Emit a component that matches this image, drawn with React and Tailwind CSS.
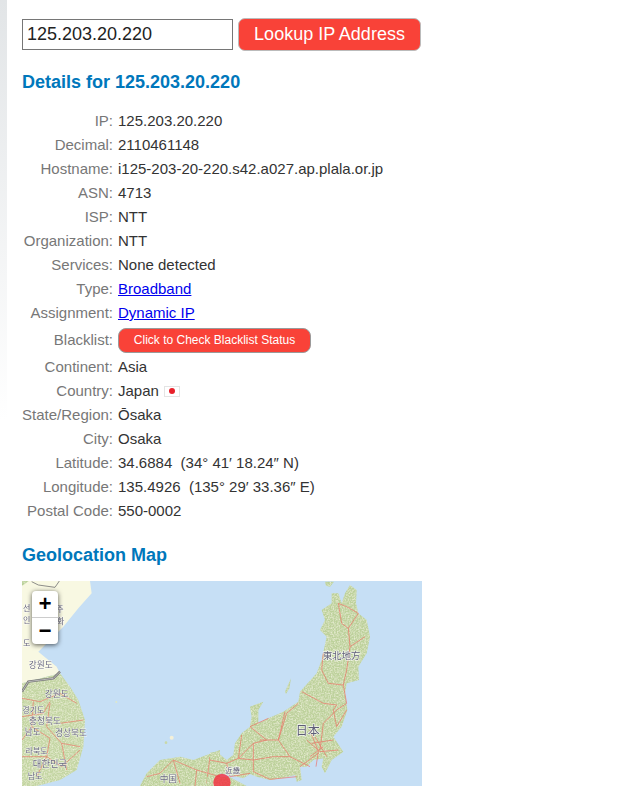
import React from 'react';

const rows = [
  ['IP', '125.203.20.220'],
  ['Decimal', '2110461148'],
  ['Hostname', 'i125-203-20-220.s42.a027.ap.plala.or.jp'],
  ['ASN', '4713'],
  ['ISP', 'NTT'],
  ['Organization', 'NTT'],
  ['Services', 'None detected'],
  ['Type', <a key="t" href="#" className="text-[#0000ee] underline">Broadband</a>],
  ['Assignment', <a key="a" href="#" className="text-[#0000ee] underline">Dynamic IP</a>],
  ['Blacklist', <button key="b" className="h-[25px] w-[193px] rounded-[8px] border border-[#9a9a9a] bg-[#f94238] text-[12px] font-medium text-white">Click to Check Blacklist Status</button>],
  ['Continent', 'Asia'],
  ['Country', <span key="c" className="flex items-center gap-[5px]">Japan <span className="flex h-[11px] w-[16px] items-center justify-center border border-[#e4e4e4] bg-white"><span className="h-[6px] w-[6px] rounded-full bg-[#e8202a]" /></span></span>],
  ['State/Region', 'Ōsaka'],
  ['City', 'Osaka'],
  ['Latitude', '34.6884\u00a0 (34° 41′ 18.24″ N)'],
  ['Longitude', '135.4926\u00a0 (135° 29′ 33.36″ E)'],
  ['Postal Code', '550-0002'],
];

const koreanLabels = [
  ['강원도', 122, 285, 26],
  ['강원도', 170, 372, 26],
  ['경기도', 100, 420, 24],
  ['충청북도', 135, 452, 26],
  ['경상북도', 213, 490, 26],
  ['남도', 98, 487, 26],
  ['라북도', 110, 542, 24],
  ['대한민국', 150, 581, 28],
  ['남도', 105, 617, 24],
];

function JapanMap() {
  return (
    <svg viewBox="0 0 1200 615" className="h-full w-full blur-[0.3px]">
      <defs>
        <filter id="mottle">
          <feTurbulence type="fractalNoise" baseFrequency="0.22" numOctaves="2" seed="4" result="n" />
          <feColorMatrix in="n" values="0 0 0 0 1  0 0 0 0 0.98  0 0 0 0 0.85  1.3 0 0 0 -0.5" result="w" />
          <feComposite in="w" in2="SourceAlpha" operator="in" result="t" />
          <feMerge>
            <feMergeNode in="SourceGraphic" />
            <feMergeNode in="t" />
          </feMerge>
        </filter>
      </defs>
      <rect width="1200" height="615" fill="#c6dff5" />

      <g transform="translate(-66,-33)">
        <path d="M66 33L270 33L275 70L235 115L190 170L130 230L115 245L170 290L180 310L66 340Z" fill="#f8f8e2" />
        <g filter="url(#mottle)">
          <path d="M66 340L180 310L210 350L235 390L255 450L250 530L230 600L180 630L110 648L66 648Z" fill="#c3d5a2" />
          <path d="M420 648L440 610L480 570L540 560L580 570L620 555L660 540L660 648Z" fill="#bdd19b" />
          <path d="M66 33L86 33L66 48Z" fill="#b6cf94" />
        </g>
        <path d="M95 35L115 45L165 52L178 33" fill="none" stroke="#777" strokeWidth="2.5" />
        <path d="M66 365L85 335L160 325L180 305" fill="none" stroke="#777" strokeWidth="7" />
        <path d="M66 365L85 335L160 325L180 305" fill="none" stroke="#ddd" strokeWidth="2" />
        <circle cx="515" cy="503" r="6" fill="#f4f0d8" />
        <circle cx="349" cy="396" r="3" fill="#dfe8c8" />
        <circle cx="498" cy="518" r="4" fill="#c8d8a8" />
        <g fill="none" stroke="#f0685f" strokeWidth="2.5" opacity="0.7">
          <path d="M66 385L120 395L180 370L230 400" />
          <path d="M66 440L130 430L150 395" />
          <path d="M100 395L95 470L66 510" />
          <path d="M150 400L140 470L185 520L240 530" />
          <path d="M95 470L150 505L140 560L185 590L240 540" />
          <path d="M66 560L140 560L110 620" />
          <path d="M180 460L250 450" />
          <path d="M185 520L200 600" />
          <path d="M440 620L480 610L520 570L590 600L660 620" />
          <path d="M520 570L540 640M590 600L585 648M630 560L620 640" />
        </g>
        <g fontFamily="'Noto Sans CJK KR', sans-serif" fill="#6b6a80" stroke="#ffffff" strokeOpacity="0.7" strokeWidth="3" paintOrder="stroke" textAnchor="middle">
          {koreanLabels.map(([t, x, y, s]) => (
            <text key={t + x} x={x} y={y + 9} fontSize={s}>{t}</text>
          ))}
          <text x="505" y="636" fontSize="26">中国</text>
          <text x="80" y="122" fontSize="24">선</text>
          <text x="180" y="125" fontSize="24">주</text>
          <text x="80" y="160" fontSize="24">인</text>
          <text x="182" y="162" fontSize="24">화</text>
          <text x="80" y="228" fontSize="24">도</text>
        </g>
      </g>

      <g transform="translate(564,-33)">
        <g filter="url(#mottle)">
          <path d="M345 35L372 35L360 50L348 47Z" fill="#b9d09a" />
          <path d="M365 70L385 70L395 100L405 70L420 45L440 60L438 100L445 130L470 150L480 200L470 250L445 290L447 330L410 340L405 370L412 420L395 470L370 500L390 530L400 545L365 570L345 610L335 590L340 565L310 570L290 590L270 590L275 630L260 635L255 615L215 625L180 630L140 620L120 612L100 625L60 615L0 605L0 548L20 545L50 570L70 555L75 520L95 490L120 470L125 440L120 410L160 395L145 420L145 460L175 445L220 425L265 395L270 365L320 310L335 270L350 200L330 180L345 150L335 120L365 100Z" fill="#bdd19b" />
          <path d="M225 365L243 325L238 355L228 372Z" fill="#bdd19b" />
          <path d="M-10 648L-10 620L60 622L110 648Z" fill="#bdd19b" />
        </g>
        <g fill="none" stroke="#f0685f" strokeWidth="2.5" opacity="0.75">
          <path d="M385 100L395 160L415 175L420 230L410 300L400 345L410 400L380 420L340 460L330 540" />
          <path d="M445 130L415 175M465 200L420 230M385 100L410 110L445 130" />
          <path d="M275 365L340 400L380 405L370 420" />
          <path d="M265 400L230 430L205 510L240 560L300 590" />
          <path d="M95 495L85 565L130 520L130 605M120 470L170 510L130 520" />
          <path d="M225 425L205 510L150 510M175 445L120 470" />
          <path d="M290 510L330 545L385 540M300 480L325 545L318 590M270 590L325 550" />
          <path d="M305 520L370 510M315 500L350 560M340 530L300 560" />
          <path d="M85 565L130 570L190 560L240 560M130 605L180 628L260 620" />
          <path d="M0 570L50 580L85 565M50 580L60 620L120 610" />
          <path d="M340 250L335 300L355 340L400 345" />
          <path d="M370 420L380 470L410 420" />
        </g>
        <g fontFamily="'Noto Sans CJK JP', sans-serif" fill="#5e5d78" stroke="#ffffff" strokeOpacity="0.75" strokeWidth="4" paintOrder="stroke" textAnchor="middle">
          <text x="395" y="267" fontSize="28">東北地方</text>
          <text x="293" y="495" fontSize="36">日本</text>
          <text x="68" y="610" fontSize="22">近畿</text>
        </g>
        <circle cx="36" cy="637" r="26" fill="#f42a3c" opacity="0.8" />
      </g>
    </svg>
  );
}

export default function App() {
  return (
    <div className="flex h-[786px] overflow-hidden bg-white font-['Liberation_Sans',Arial,sans-serif] text-[15px] text-[#333]">
      <div className="h-[420px] w-[7px] bg-gradient-to-b from-[#e2e5e7] to-white" />
      <div className="ml-[15px] w-[400px] pt-[18px]">
        <form className="flex items-center gap-[5px]">
          <input
            readOnly
            value="125.203.20.220"
            className="h-[31px] w-[211px] border border-[#767676] px-[4px] text-[18px] text-[#222] outline-none"
          />
          <button type="button" className="h-[33px] w-[183px] rounded-[7px] border border-[#bbb] bg-[#f94238] text-[18px] text-white">
            Lookup IP Address
          </button>
        </form>

        <h2 className="mt-[19px] text-[18px] font-bold leading-[24px] text-[#0077bb]">Details for 125.203.20.220</h2>

        <div className="mt-[15px]">
          {rows.map(([label, value]) => (
            <div key={label} className={`flex items-center ${label === 'Blacklist' ? 'h-[30px]' : 'h-[24px]'}`}>
              <div className="w-[91px] shrink-0 whitespace-nowrap text-right text-[#777]">{label}:</div>
              <div className="ml-[5px] whitespace-nowrap">{value}</div>
            </div>
          ))}
        </div>

        <h2 className="mt-[20px] text-[18px] font-bold leading-[24px] text-[#0077bb]">Geolocation Map</h2>

        <div className="relative mt-[14px] h-[205px] w-[400px] overflow-hidden">
          <JapanMap />
          <div className="absolute left-[10px] top-[10px] w-[26px] overflow-hidden rounded-[4px] bg-white shadow-[0_1px_5px_rgba(0,0,0,0.65)]">
            <div className="flex h-[27px] items-center justify-center border-b border-[#ccc] pt-[2px] font-['Liberation_Mono',monospace] text-[22px] font-bold text-black">+</div>
            <div className="flex h-[26px] items-center justify-center pt-[3px] font-['Liberation_Mono',monospace] text-[22px] font-bold text-black">−</div>
          </div>
        </div>
      </div>
    </div>
  );
}
